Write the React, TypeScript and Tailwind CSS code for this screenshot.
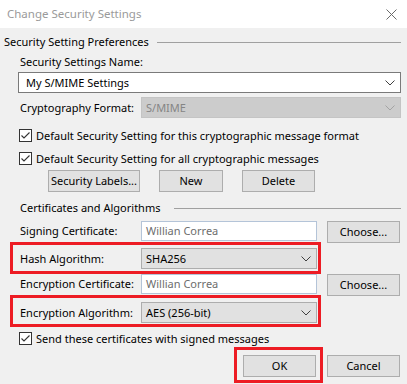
import { ReactNode } from 'react';

function Chevron({ muted }: { muted?: boolean }) {
  return (
    <svg width="10" height="6" viewBox="0 0 10 6" className="shrink-0">
      <path
        d="M0.5 0.5 L5 5 L9.5 0.5"
        fill="none"
        stroke={muted ? '#a3a3a3' : '#404040'}
        strokeWidth="1"
      />
    </svg>
  );
}

function Check() {
  return (
    <div className="w-[13px] h-[13px] border border-[#333333] bg-white flex items-center justify-center shrink-0">
      <svg width="11" height="11" viewBox="0 0 11 11">
        <path d="M1.5 5.5 L4 8 L9.5 2.5" fill="none" stroke="#333333" strokeWidth="1.1" />
      </svg>
    </div>
  );
}

function CheckRow({ children, mt }: { children: ReactNode; mt: string }) {
  return (
    <div className={`flex items-center h-[13px] ml-[19px] ${mt}`}>
      <Check />
      <span className="ml-[4px] leading-4 whitespace-nowrap">{children}</span>
    </div>
  );
}

function Btn({ children, w }: { children: ReactNode; w: string }) {
  return (
    <button className={`${w} h-[22px] bg-[#e1e1e1] border border-[#adadad] flex items-center justify-center leading-4 whitespace-nowrap`}>
      {children}
    </button>
  );
}

function Combo({ value }: { value: string }) {
  return (
    <div className="w-[176px] h-[21px] bg-[#e1e1e1] border border-[#adadad] flex items-center justify-between pl-[4px] pr-[5px]">
      <span className="leading-4 whitespace-nowrap">{value}</span>
      <Chevron />
    </div>
  );
}

function CertRow({ label, mt }: { label: string; mt: string }) {
  return (
    <div className={`flex items-start ml-[18px] ${mt}`}>
      <div className="w-[123px] pl-[2px] h-[20px] flex items-center leading-4 whitespace-nowrap">{label}</div>
      <div className="w-[176px] h-[20px] bg-white border border-[#b4c4d8] flex items-center pl-[4px] text-[#6d6d6d] leading-4 whitespace-nowrap">
        Willian Correa
      </div>
      <div className="ml-[10px]">
        <Btn w="w-[73px]">Choose...</Btn>
      </div>
    </div>
  );
}

function Header({ title, ml, lineMl, mt }: { title: string; ml: string; lineMl: string; mt: string }) {
  return (
    <div className={`flex items-center h-4 pr-[6px] ${ml} ${mt}`}>
      <span className="leading-4 whitespace-nowrap">{title}</span>
      <div className={`flex-1 h-px bg-[#a0a0a0] ${lineMl}`} />
    </div>
  );
}

export default function App() {
  return (
    <div className="w-[407px] h-[384px] overflow-hidden bg-[#f0f0f0] text-[11px] text-black font-['Noto_Sans',sans-serif]">
      <div className="h-[28px] bg-white flex items-center justify-between pl-[7px] pr-[10px]">
        <span className="text-[#9a9a9a] text-[11.5px] leading-4">Change Security Settings</span>
        <svg width="11" height="11" viewBox="0 0 11 11">
          <path d="M0.5 0.5 L10.5 10.5 M10.5 0.5 L0.5 10.5" stroke="#6a6a6a" strokeWidth="1" />
        </svg>
      </div>

      <Header title="Security Setting Preferences" ml="ml-[4px]" lineMl="ml-[8px]" mt="mt-[6px]" />

      <div className="ml-[20px] mt-[4px] h-4 leading-4">Security Settings Name:</div>

      <div className="ml-[18px] mr-[6px] mt-[2px] h-[21px] bg-white border border-[#7a7a7a] flex items-center justify-between pl-[7px] pr-[5px]">
        <span className="leading-4">My S/MIME Settings</span>
        <Chevron />
      </div>

      <div className="flex items-center ml-[18px] mr-[6px] mt-[4px]">
        <div className="w-[123px] pl-[2px] leading-4 whitespace-nowrap">Cryptography Format:</div>
        <div className="flex-1 h-[21px] bg-[#cccccc] border border-[#c4c4c4] flex items-center justify-between pl-[4px] pr-[5px] text-[#858585]">
          <span className="leading-4">S/MIME</span>
          <Chevron muted />
        </div>
      </div>

      <CheckRow mt="mt-[11px]">Default Security Setting for this cryptographic message format</CheckRow>
      <CheckRow mt="mt-[10px]">Default Security Setting for all cryptographic messages</CheckRow>

      <div className="flex ml-[48px] mt-[5px] gap-[19px]">
        <Btn w="w-[92px]">Security Labels...</Btn>
        <Btn w="w-[64px]">New</Btn>
        <Btn w="w-[73px]">Delete</Btn>
      </div>

      <Header title="Certificates and Algorithms" ml="ml-[20px]" lineMl="ml-[14px]" mt="mt-[8px]" />

      <CertRow label="Signing Certificate:" mt="mt-[5px]" />

      <div className="ml-[10px] w-[311px] border-[3px] border-[#ed1c24] flex items-start pl-[7px] pt-[3px] pb-[2px] -mt-[1px]">
        <div className="w-[121px] h-[21px] flex items-center leading-4 whitespace-nowrap">Hash Algorithm:</div>
        <Combo value="SHA256" />
      </div>

      <CertRow label="Encryption Certificate:" mt="mt-0" />

      <div className="ml-[10px] w-[311px] border-[3px] border-[#ed1c24] flex items-start pl-[7px] pt-[4px] pb-[1px] -mt-[1px]">
        <div className="w-[121px] h-[21px] flex items-center leading-4 whitespace-nowrap">Encryption Algorithm:</div>
        <Combo value="AES (256-bit)" />
      </div>

      <CheckRow mt="mt-[5px]">Send these certificates with signed messages</CheckRow>

      <div className="flex items-start mt-[2px]">
        <div className="ml-[234px] w-[89px] h-[36px] border-[3px] border-[#ed1c24] pl-[6px] pt-[5px]">
          <Btn w="w-[73px]">OK</Btn>
        </div>
        <div className="ml-[4px] mt-[8px]">
          <Btn w="w-[73px]">Cancel</Btn>
        </div>
      </div>
    </div>
  );
}
